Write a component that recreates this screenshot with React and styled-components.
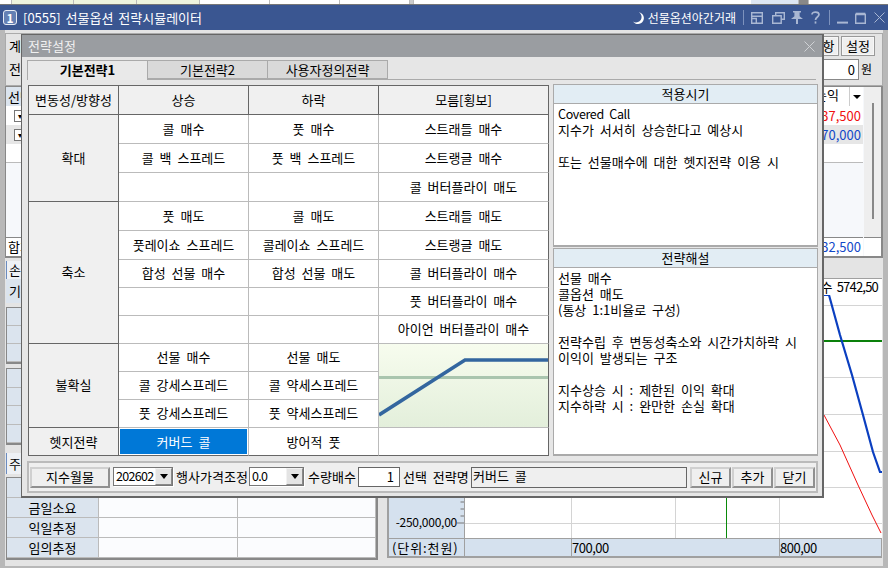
import React from 'react';
import styled, { createGlobalStyle } from 'styled-components';

const Global = createGlobalStyle`
  html, body { margin: 0; padding: 0; background: #b8b8b8; overflow: hidden; }
  * { box-sizing: border-box; }
  body { font-family: "Noto Sans CJK KR", "Noto Sans", sans-serif; font-size: 13px; color: #000; }
`;

const Screen = styled.div`
  position: relative; width: 888px; height: 568px; overflow: hidden;
  display: flex; flex-direction: column; background: #b8b8b8; line-height: 16px;
`;

/* ---- window behind ---- */
const TopStrip = styled.div`
  height: 5px; display: grid; grid-template-columns: 12px 62px 63px 63px 70px 70px 70px 4px 5px 332px 48px 10px 1fr;
  background: #fff; border-bottom: 1px solid #777; overflow: hidden;
`;
const StripCell = styled.div`
  background: ${p => p.$bg || '#fff'};
  border-right: 1px solid ${p => p.$line || '#bbb'};
`;
const TitleBar = styled.header`
  height: 25px; background: #3a5691; color: #fff; display: flex; align-items: center; padding: 0 3px 0 3px; flex: none;
`;
const Badge = styled.span`
  width: 14px; height: 15px; border: 1px solid #e8ecf4; border-radius: 3px; background: #6480b4;
  font-size: 12px; font-weight: 700; line-height: 13px; text-align: center; margin-right: 6px;
`;
const TitleText = styled.span`font-size: 13px; word-spacing: 2px; white-space: nowrap;`;
const Spacer = styled.span`flex: 1;`;
const NightText = styled.span`font-size: 12px; margin-left: 2px; white-space: nowrap;`;
const Divider = styled.span`width: 1px; height: 15px; background: #7d92bd; margin: 0 ${p => p.$r}px 0 ${p => p.$l}px;`;
const TitleIcon = styled.svg`flex: none; margin-right: ${p => p.$mr || 0}px; display: block;`;

const Body = styled.main`
  flex: 1; margin: 0 5px 2px 5px; background: #e4e4e4; display: flex; flex-direction: column; padding-top: 3px; min-height: 0;
`;
const TopPanel = styled.section`
  height: 53px; border: 1px solid #aaa; background: #e4e4e4; padding: 2px 7px 0 3px; display: flex; flex-direction: column; gap: 3px; flex: none;
`;
const PanelRow = styled.div`display: flex; align-items: center; height: 20px;`;
const RaisedBtn = styled.button`
  font: inherit; color: #000; height: 20px; width: ${p => p.$w}px; margin-left: ${p => p.$ml || 0}px; padding: 0;
  background: #efefef; border: 1px solid #999; box-shadow: inset 0 0 0 1px #f7f7f7; flex: none; white-space: nowrap;
`;
const Amount = styled.span`
  width: 120px; height: 21px; border: 1px solid #888; background: #fff; text-align: right; padding-right: 3px; line-height: 19px; margin-right: 2px;
`;
const Unit = styled.span`font-size: 12px; margin-right: 3px;`;
const ListPanel = styled.section`
  height: 172px; margin-top: 0; border: 1px solid #888; border-width: 1px 2px 2px 1px; display: flex; flex: none; background: #f6f8fb;
`;
const ListMain = styled.div`flex: 1; display: flex; flex-direction: column; min-width: 0;`;
const ListHead = styled.div`
  height: 19px; display: grid; grid-template-columns: 60px 1fr 14px; background: #dbe4ee; flex: none; align-items: center;
`;
const ListName = styled.span`padding-left: 2px;`;
const ListRight = styled.span`text-align: right; padding-right: 10px; background: #fff; height: 100%;`;
const DropBox = styled.span`
  background: #fff; height: 100%; display: flex; align-items: center; justify-content: center; border-left: 1px solid #ccc;
  &::after { content: ""; border: 4px solid transparent; border-top: 4px solid #000; border-bottom: 0; }
`;
const ListRow = styled.div`
  height: 19px; display: flex; justify-content: space-between; align-items: center; flex: none; padding: 0 2px 0 8px;
  background: ${p => p.$alt ? '#e6e6e6' : '#fff'};
  border-bottom: ${p => p.$last ? '1px solid #bbb' : 0};
  color: ${p => p.$color || '#000'};
`;
const Check = styled.span`
  width: 11px; height: 12px; border: 1px solid #777; background: #fff; color: #000; font-size: 8px; line-height: 10px; text-align: center;
`;
const ListFill = styled.div`flex: 1;`;
const SumRow = styled.div`
  height: 19px; flex: none; display: flex; justify-content: space-between; align-items: center; background: #fff; border-top: 1px solid #888; padding: 0 2px 0 2px; color: #1248c8;
`;
const SumLabel = styled.span`color: #000;`;
const ScrollCol = styled.div`
  width: 18px; flex: none; background: #eee; display: flex; flex-direction: column; align-items: center; padding-top: 16px; border-left: 1px solid #f6f8fb;
`;
const ScrollThumb = styled.span`width: 2px; height: 116px; background: #888;`;
const ScrollEnd = styled.span`width: 100%; height: 19px; margin-top: auto; background: #fff; border-top: 1px solid #888;`;

const Lower = styled.div`flex: 1; display: flex; min-height: 0; padding-top: 3px;`;
const LeftCol = styled.div`width: 372px; margin-left: 1px; flex: none; display: flex; flex-direction: column;`;
const TabLabel = styled.div`
  height: ${p => p.$h}px; width: 60px; margin-top: ${p => p.$mt || 0}px; border-left: 1px solid #6b8cc0; background: #eef1f5; padding-left: 2px; flex: none; line-height: ${p => p.$h}px;
`;
const InfoBar = styled.div`height: 24px; background: #dbe4ee; padding-left: 3px; line-height: 24px; flex: none;`;
const MiniBox = styled.div`
  margin-top: ${p => p.$mt}px; border: 1px solid #888; flex: none; display: grid; grid-auto-rows: ${p => p.$rh || 19}px; grid-template-columns: 92px 1fr 1fr;
  background: #bbb; gap: 0; border-width: 1px 2px 2px 1px;
`;
const MiniLabel = styled.div`
  background: #dbe4ee; border-bottom: 1px solid #bbb; border-right: 1px solid #bbb; display: flex; align-items: center; justify-content: center;
`;
const MiniCell = styled.div`background: #fbfcfe; border-bottom: 1px solid #bbb; border-right: 1px solid #bbb;`;

const ChartBox = styled.div`
  width: 495px; margin-left: 9px; margin-top: 17px; height: 280px; border: solid #a0a0a0; border-width: 1px 0 2px 2px;
  display: grid; grid-template-columns: 76px 1fr; grid-template-rows: 259px 18px; background: #fff; flex: none;
`;
const YAxis = styled.div`
  background: #d5e1ee; display: flex; justify-content: flex-end; align-items: flex-end; border-right: 1px solid #a0a0a0;
`;
const YLabel = styled.span`font-size: 12px; letter-spacing: -0.25px; margin-bottom: 8px; white-space: nowrap;`;
const Plot = styled.div`position: relative; background: #fff; height: 259px;`;
const PlotSvg = styled.svg`display: block;`;
const IndexTag = styled.span`
  position: absolute; right: 4px; top: 0; font-size: 13px; letter-spacing: -.8px; word-spacing: 3px; background: #fff; white-space: nowrap;
`;
const XAxis = styled.div`
  grid-column: 1 / 3; display: grid; grid-template-columns: 76px 107px 208px 1fr; background: #d5e1ee; border-top: 1px solid #a0a0a0;
`;
const XCell = styled.span`
  border-right: 1px solid #a0a0a0; font-size: 13px; letter-spacing: ${p => p.$ls ?? -.5}px; line-height: 17px; padding-left: ${p => p.$pl || 0}px; white-space: nowrap;
`;

/* ---- dialog ---- */
const Dialog = styled.div`
  position: absolute; left: 21px; top: 34px; width: 803px; height: 464px; background: #e6e6e6;
  border: solid #666; border-width: 1px 2px 2px 1px; display: flex; flex-direction: column;
`;
const DialogTitle = styled.div`
  height: 22px; flex: none; background: #9a9da1; color: #f0f0f0; display: flex; align-items: center; justify-content: space-between; padding: 0 7px 0 6px;
`;
const TabStrip = styled.div`
  height: 23px; flex: none; margin: 0 6px 4px 5px; padding-top: 3px; display: flex; border-bottom: 1px solid #aaa;
`;
const Tab = styled.div`
  width: 121px; height: ${p => p.$active ? 20 : 19}px; text-align: center; line-height: 18px; white-space: nowrap;
  background: ${p => p.$active ? '#e9e9e9' : '#d9d9d9'}; font-weight: ${p => p.$active ? 700 : 400};
  border: 1px solid #aaa; border-bottom: 0; margin-left: ${p => p.$active ? 0 : -1}px;
  border-bottom: ${p => p.$active ? 0 : '1px solid #aaa'};
  position: relative; z-index: ${p => p.$active ? 1 : 0};
`;
const Main = styled.div`display: flex; height: 372px; flex: none; padding-left: 6px; gap: 4px;`;
const Table = styled.div`
  margin-top: 1px; width: 521px; height: 371px; display: grid; grid-template-columns: 90px 130px 130px 170px;
  grid-template-rows: repeat(6, 29px) repeat(7, 28px); border: solid #666; border-width: 1px 0 0 1px; background: #fff;
`;
const Cell = styled.div`
  display: flex; align-items: center; justify-content: center; word-spacing: 3px; white-space: nowrap;
  padding-bottom: ${p => p.$lift ? 2 : 0}px;
  border-right: 1px solid ${p => p.$edge || p.$dark ? '#666' : '#bbb'};
  border-bottom: 1px solid ${p => p.$bottom || p.$dark ? '#666' : '#bbb'};
  background: ${p => p.$dark ? '#f0f0f0' : '#fff'};
  grid-row: span ${p => p.$span || 1};
`;
const SelectedCell = styled(Cell)`
  background: #0078d7; color: #fff; box-shadow: inset 0 0 0 1px #fff;
`;
const GraphCell = styled(Cell)`
  padding: 0; display: block; background: linear-gradient(#f7fcee, #e3efdb);
`;
const Side = styled.div`width: 265px; flex: none; display: flex; flex-direction: column; gap: 1px;`;
const InfoPanel = styled.section`
  height: ${p => p.$h}px; border: 2px solid #aaa; border-width: 1px 1px 2px 1px; flex: none; display: flex; flex-direction: column; background: #fff;
`;
const InfoHead = styled.div`
  height: 19px; flex: none; background: #e2edf4; border-bottom: 1px solid #aaa; text-align: center; line-height: 18px; word-spacing: 3px;
`;
const InfoText = styled.div`
  padding: 2px 4px; white-space: pre-line; word-spacing: 3px; line-height: 16px;
`;
const Latin = styled.span`letter-spacing: -0.35px; font-size: 12.5px;`;
const Footer = styled.div`
  margin: 5px 0 0 5px; width: 791px; height: 32px; flex: none; border: 2px solid #bbb; background: #efefef; display: flex; align-items: center; padding-left: 1px;
`;
const FooterBtn = styled.button`
  font: inherit; color: #000; width: ${p => p.$w}px; height: 21px; margin-left: ${p => p.$ml || 0}px; padding: 0; flex: none; word-spacing: 3px;
  background: #efefef; border: 2px solid; border-color: #d0d0d0 #909090 #909090 #d0d0d0; white-space: nowrap;
`;
const Combo = styled.div`
  width: ${p => p.$w}px; height: 19px; margin: -1px 0 0 ${p => p.$ml}px; flex: none; display: flex; background: #fff; border: 1px solid #777; box-shadow: 1px 1px 0 #fff;
  padding-left: 2px; line-height: 16px; justify-content: space-between; font-size: 12.5px; letter-spacing: -.7px;
`;
const ComboArrow = styled.span`
  width: 17px; flex: none; background: #e4e4e4; border: 1px solid; border-color: #f2f2f2 #888 #888 #f2f2f2; display: flex; align-items: center; justify-content: center;
  &::after { content: ""; border: 4px solid transparent; border-top: 5px solid #000; border-bottom: 0; }
`;
const FooterLabel = styled.span`
  width: ${p => p.$w}px; margin-left: ${p => p.$ml}px; flex: none; text-align: center; white-space: nowrap; word-spacing: 3px;
`;
const NumberInput = styled.span`
  width: 42px; height: 20px; margin-left: 2px; flex: none; background: #fff; border: 1px solid #666; text-align: right; padding-right: 5px; line-height: 18px;
`;
const NameField = styled.span`
  width: 216px; height: 21px; margin-left: 3px; flex: none; background: #efefef; border: 1px solid #666; padding-left: 1px; line-height: 15px; word-spacing: 3px;
`;

const Moon = () => (
  <TitleIcon width="14" height="14" viewBox="0 0 14 14" $mr={0}>
    <path d="M7 1.2A6 6 0 1 1 1 10.6 5.200 5.200 0 0 0 7 1.2Z" fill="#fff" />
  </TitleIcon>
);
const ico = { fill: 'none', stroke: '#a9b7d3', strokeWidth: 1.4 };
const Layout = () => (
  <TitleIcon width="12" height="12" viewBox="0 0 12 12" $mr={9} {...ico}>
    <path d="M.7.7h10.6v10.6H.7ZM.7 4.2h10.6M.7 6.5h4.6v4.8" />
  </TitleIcon>
);
const Cascade = () => (
  <TitleIcon width="13" height="12" viewBox="0 0 13 12" $mr={6} {...ico}>
    <path d="M3.7 3.5V.7h8.6v6.6H9.2M.7 3.7h8.5v7.6H.7Z" />
  </TitleIcon>
);
const Pin = () => (
  <TitleIcon width="12" height="13" viewBox="0 0 12 13" $mr={8}>
    <path d="M2 0h8v1.400H8.600v3.800L12 8H7v5H5V8H0l3.400-2.800V1.400H2Z" fill="#a9b7d3" />
  </TitleIcon>
);
const Help = () => (
  <TitleIcon width="9" height="13" viewBox="0 0 9 13" {...ico} strokeWidth="1.7">
    <path d="M1 3.500C1 .2 8 .2 8 3.600 8 6 4.500 6 4.500 9" /><path d="M4.500 10.400v2.200" />
  </TitleIcon>
);
const Minimize = () => (
  <TitleIcon width="11" height="12" viewBox="0 0 11 12" $mr={7}>
    <rect y="9.600" width="11" height="2" fill="#a9b7d3" />
  </TitleIcon>
);
const Maximize = () => (
  <TitleIcon width="11" height="12" viewBox="0 0 11 12" $mr={8} {...ico}>
    <path d="M.7 2.500h9.600v8.800H.7Z" /><path d="M.7 1.700h9.600" strokeWidth="2" />
  </TitleIcon>
);
const Close = ({ color = '#a9b7d3', size = 11 }) => (
  <TitleIcon width={size} height={size} viewBox="0 0 11 11" fill="none" stroke={color} strokeWidth="1">
    <path d="M.5.5l10 10M10.500.5l-10 10" />
  </TitleIcon>
);

const rows = [
  { group: '확대', start: 0, cells: [['콜 매수', '풋 매수', '스트래들 매수'], ['콜 백 스프레드', '풋 백 스프레드', '스트랭글 매수'], ['', '', '콜 버터플라이 매도']] },
  { group: '축소', start: 3, lift: true, cells: [['풋 매도', '콜 매도', '스트래들 매도'], ['풋레이쇼 스프레드', '콜레이쇼 스프레드', '스트랭글 매도'], ['합성 선물 매수', '합성 선물 매도', '콜 버터플라이 매수'], ['', '', '풋 버터플라이 매수'], ['', '', '아이언 버터플라이 매수']] },
  { group: '불확실', start: 8, lift: true, cells: [['선물 매수', '선물 매도', null], ['콜 강세스프레드', '콜 약세스프레드'], ['풋 강세스프레드', '풋 약세스프레드']] },
];

const gridYs = [305.5, 377.5, 414.5, 451.5, 487.5, 523.5];
const gridXs = [571.5, 675.5, 779.5];

const Chart = () => (
  <PlotSvg width="417" height="259" viewBox="465 279 417 259">
    {gridYs.map(y => <line key={y} x1="465" x2="882" y1={y} y2={y} stroke="#d4d4d4" />)}
    {gridXs.map(x => <line key={x} x1={x} x2={x} y1="279" y2="538" stroke="#d4d4d4" />)}
    <line x1="726.5" x2="726.5" y1="279" y2="538" stroke="#0a8a0a" />
    <line x1="465" x2="882" y1="341" y2="341" stroke="#0a800a" strokeWidth="2" />
    <polyline points="465,295 829,295 840,335 852,375 863,415 873,452 880,472 882,472" fill="none" stroke="#0b3fc0" strokeWidth="2.2" />
    <polyline points="700,300 824,415 840,445 858,485 872,515 881,533" fill="none" stroke="#f01010" strokeWidth="1" />
  </PlotSvg>
);

const Payoff = () => (
  <svg width="169" height="83" viewBox="0 0 169 83" style={{ display: 'block' }}>
    <line x1="0" x2="169" y1="33.500" y2="33.500" stroke="#a9c5ae" strokeWidth="3" />
    <polyline points="0,71 86,16 169,16" fill="none" stroke="#33669f" strokeWidth="3.600" />
  </svg>
);

const Ticks = () => (
  <svg width="7" height="42" viewBox="0 0 7 42" style={{ display: 'block', marginBottom: 14 }}>
    <path d="M3.500 6H7M3.500 13H7M3.500 20H7M3.500 27H7M3.500 34H7M0 41H7" stroke="#777" />
  </svg>
);

export default function App() {
  return (
    <Screen>
      <Global />
      <TopStrip>
        <StripCell $bg="#fff" />
        <StripCell $bg="#eef4de" /><StripCell $bg="#eef4de" /><StripCell $bg="#eef4de" />
        <StripCell /><StripCell /><StripCell />
        <StripCell $bg="#ccc" />
        <StripCell $line="#fff" />
        <StripCell $line="#fff" />
        <StripCell $bg="#dde6f2" />
        <StripCell $bg="#888" />
        <StripCell $line="#fff" />
      </TopStrip>
      <TitleBar>
        <Badge>1</Badge>
        <TitleText>[0555] 선물옵션 전략시뮬레이터</TitleText>
        <Spacer />
        <Moon />
        <NightText>선물옵션야간거래</NightText>
        <Divider $l={7} $r={7} />
        <Layout /><Cascade /><Pin /><Help />
        <Divider $l={9} $r={7} />
        <Minimize /><Maximize /><Close />
      </TitleBar>
      <Body>
        <TopPanel>
          <PanelRow>
            <span>계좌</span><Spacer />
            <RaisedBtn $w={33}>사항</RaisedBtn>
            <RaisedBtn $w={34} $ml={2}>설정</RaisedBtn>
          </PanelRow>
          <PanelRow>
            <span>전략</span><Spacer />
            <Amount>0</Amount><Unit>원</Unit>
          </PanelRow>
        </TopPanel>
        <ListPanel>
          <ListMain>
            <ListHead>
              <ListName>선택</ListName><ListRight>손익</ListRight><DropBox />
            </ListHead>
            <ListRow $color="#f01010"><Check>▾</Check><span>137,500</span></ListRow>
            <ListRow $alt $color="#1248c8"><Check>▾</Check><span>570,000</span></ListRow>
            <ListRow $last />
            <ListFill />
            <SumRow><SumLabel>합계</SumLabel><span>832,500</span></SumRow>
          </ListMain>
          <ScrollCol><ScrollThumb /><ScrollEnd /></ScrollCol>
        </ListPanel>
        <Lower>
          <LeftCol>
            <TabLabel $h={18}>손익</TabLabel>
            <InfoBar>기준</InfoBar>
            <MiniBox $mt={4} $rh={18}>
              {[0, 1, 2].map(i => <React.Fragment key={i}><MiniLabel /><MiniCell /><MiniCell /></React.Fragment>)}
            </MiniBox>
            <MiniBox $mt={4} $rh={18.5}>
              {[0, 1, 2, 3].map(i => <React.Fragment key={i}><MiniLabel /><MiniCell /><MiniCell /></React.Fragment>)}
            </MiniBox>
            <TabLabel $h={21} $mt={8}>주문</TabLabel>
            <MiniBox $mt={3} $rh={20}>
              {['', '금일소요', '익일추정', '임의추정'].map(t => (
                <React.Fragment key={t}><MiniLabel>{t}</MiniLabel><MiniCell /><MiniCell /></React.Fragment>
              ))}
            </MiniBox>
          </LeftCol>
          <ChartBox>
            <YAxis><YLabel>-250,000,00</YLabel><Ticks /></YAxis>
            <Plot>
              <Chart />
              <IndexTag>지수 5742,50</IndexTag>
            </Plot>
            <XAxis>
              <XCell $pl={3} $ls={0.9}>(단위:천원)</XCell>
              <XCell />
              <XCell>700,00</XCell>
              <XCell>800,00</XCell>
            </XAxis>
          </ChartBox>
        </Lower>
      </Body>

      <Dialog>
        <DialogTitle>전략설정<Close color="#d0d2d5" /></DialogTitle>
        <TabStrip>
          <Tab $active>기본전략1</Tab>
          <Tab>기본전략2</Tab>
          <Tab>사용자정의전략</Tab>
        </TabStrip>
        <Main>
          <Table>
            <Cell $dark>변동성/방향성</Cell>
            <Cell $dark>상승</Cell>
            <Cell $dark>하락</Cell>
            <Cell $dark>모름[횡보]</Cell>
            {rows.map(r => (
              <React.Fragment key={r.group}>
                <Cell $dark $span={r.cells.length} $lift={r.lift}>{r.group}</Cell>
                {r.cells.map((c, i) => {
                  const lift = r.start + i >= 5;
                  return (
                    <React.Fragment key={i}>
                      <Cell $lift={lift}>{c[0]}</Cell>
                      <Cell $lift={lift}>{c[1]}</Cell>
                      {c[2] === null
                        ? <GraphCell $edge $span={3}><Payoff /></GraphCell>
                        : c.length > 2 && <Cell $edge $lift={lift}>{c[2]}</Cell>}
                    </React.Fragment>
                  );
                })}
              </React.Fragment>
            ))}
            <Cell $dark>헷지전략</Cell>
            <SelectedCell $bottom>커버드 콜</SelectedCell>
            <Cell $bottom>방어적 풋</Cell>
            <Cell $bottom $edge />
          </Table>
          <Side>
            <InfoPanel $h={163}>
              <InfoHead>적용시기</InfoHead>
              <InfoText><Latin>Covered Call</Latin>{`
지수가 서서히 상승한다고 예상시

또는 선물매수에 대한 헷지전략 이용 시`}</InfoText>
            </InfoPanel>
            <InfoPanel $h={208}>
              <InfoHead>전략해설</InfoHead>
              <InfoText>{`선물 매수
콜옵션 매도
(통상 1:1비율로 구성)

전략수립 후 변동성축소와 시간가치하락 시
이익이 발생되는 구조

지수상승 시 : 제한된 이익 확대
지수하락 시 : 완만한 손실 확대`}</InfoText>
            </InfoPanel>
          </Side>
        </Main>
        <Footer>
          <FooterBtn $w={80}>지수월물</FooterBtn>
          <Combo $w={60} $ml={3}>202602<ComboArrow /></Combo>
          <FooterLabel $w={72} $ml={3}>행사가격조정</FooterLabel>
          <Combo $w={55} $ml={1}>0.0<ComboArrow /></Combo>
          <FooterLabel $w={48} $ml={4}>수량배수</FooterLabel>
          <NumberInput>1</NumberInput>
          <FooterLabel $w={65} $ml={3}>선택 전략명</FooterLabel>
          <NameField>커버드 콜</NameField>
          <FooterBtn $w={41} $ml={3}>신규</FooterBtn>
          <FooterBtn $w={41} $ml={1}>추가</FooterBtn>
          <FooterBtn $w={41} $ml={1}>닫기</FooterBtn>
        </Footer>
      </Dialog>
    </Screen>
  );
}
